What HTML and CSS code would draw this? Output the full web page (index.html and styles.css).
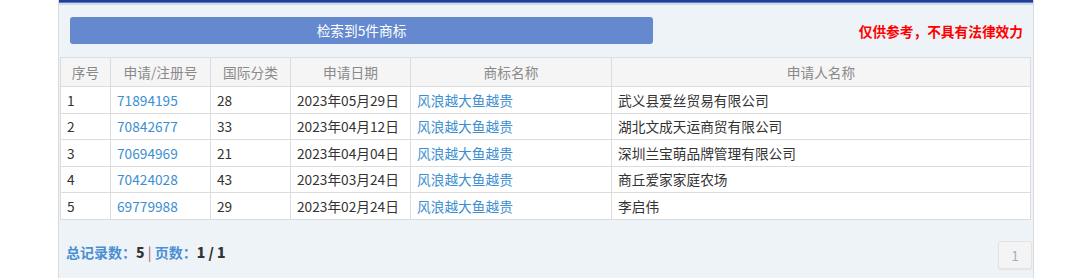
FILE: index.html
```html
<!DOCTYPE html>
<html lang="zh-CN">

<head>
    <meta charset="UTF-8">
    <title>商标检索结果</title>
    <link rel="stylesheet" href="styles.css">
</head>

<body>
    <div class="panel">
        <div class="panel-top"></div>

        <!-- 检索结果标题 -->
        <div class="toolbar">
            <div class="result-btn">检索到5件商标</div>
            <span class="notice">仅供参考，不具有法律效力</span>
        </div>

        <!-- 商标列表 -->
        <table class="tm-table">
            <colgroup>
                <col style="width: 50px">
                <col style="width: 100px">
                <col style="width: 80px">
                <col style="width: 120px">
                <col style="width: 201px">
                <col>
            </colgroup>
            <thead>
                <tr>
                    <th>序号</th>
                    <th>申请/注册号</th>
                    <th>国际分类</th>
                    <th>申请日期</th>
                    <th>商标名称</th>
                    <th>申请人名称</th>
                </tr>
            </thead>
            <tbody>
                <tr>
                    <td>1</td>
                    <td><a href="#">71894195</a></td>
                    <td>28</td>
                    <td>2023年05月29日</td>
                    <td><a href="#">风浪越大鱼越贵</a></td>
                    <td>武义县爱丝贸易有限公司</td>
                </tr>
                <tr>
                    <td>2</td>
                    <td><a href="#">70842677</a></td>
                    <td>33</td>
                    <td>2023年04月12日</td>
                    <td><a href="#">风浪越大鱼越贵</a></td>
                    <td>湖北文成天运商贸有限公司</td>
                </tr>
                <tr>
                    <td>3</td>
                    <td><a href="#">70694969</a></td>
                    <td>21</td>
                    <td>2023年04月04日</td>
                    <td><a href="#">风浪越大鱼越贵</a></td>
                    <td>深圳兰宝萌品牌管理有限公司</td>
                </tr>
                <tr>
                    <td>4</td>
                    <td><a href="#">70424028</a></td>
                    <td>43</td>
                    <td>2023年03月24日</td>
                    <td><a href="#">风浪越大鱼越贵</a></td>
                    <td>商丘爱家家庭农场</td>
                </tr>
                <tr>
                    <td>5</td>
                    <td><a href="#">69779988</a></td>
                    <td>29</td>
                    <td>2023年02月24日</td>
                    <td><a href="#">风浪越大鱼越贵</a></td>
                    <td>李启伟</td>
                </tr>
            </tbody>
        </table>

        <!-- 分页 -->
        <div class="pager">
            <div class="pager-info">
                总记录数：<b>5</b> <span class="sep">|</span> 页数：<b>1 / 1</b>
            </div>
            <a href="#" class="page-num">1</a>
        </div>
    </div>
</body>

</html>
```

FILE: styles.css
```css
* {
    margin: 0;
    padding: 0;
    box-sizing: border-box;
    font-family: 'Noto Sans CJK SC', 'Noto Sans', sans-serif;
}

body {
    background: #fff;
}

.panel {
    width: 976px;
    height: 278px;
    margin-left: 58px;
    background: #eef3f7;
    border-left: 1px solid #d6dbe0;
    border-right: 1px solid #d6dbe0;
}

.panel-top {
    height: 5px;
    background: #1f3f9b;
    border-bottom: 2px solid #d3dae3;
    box-shadow: inset 0 -1px 0 #5b78c2;
}

.toolbar {
    display: flex;
    justify-content: space-between;
    align-items: center;
    padding: 12px 10px 0 11px;
}

.result-btn {
    width: 583px;
    height: 27px;
    line-height: 27px;
    background: #6489cf;
    color: #fff;
    border-radius: 3px;
    text-align: center;
    font-size: 13.7px;
}

.notice {
    color: #f00;
    font-size: 13.7px;
    font-weight: bold;
}

.tm-table {
    width: 971px;
    margin: 13px 0 0 1px;
    border-collapse: collapse;
    table-layout: fixed;
    background: #fff;
    font-size: 13.7px;
}

.tm-table th,
.tm-table td {
    border: 1px solid #dcdcdc;
    padding: 0 6px;
    text-align: left;
    white-space: nowrap;
}

.tm-table th {
    height: 29px;
    background: #f5f5f5;
    color: #8a8a8a;
    font-weight: normal;
    text-align: center;
}

.tm-table td {
    height: 26.5px;
    color: #333;
}

.tm-table a {
    color: #3d8fd1;
    text-decoration: none;
}

.pager {
    display: flex;
    justify-content: space-between;
    align-items: center;
    padding: 21px 1px 0 7px;
}

.pager-info {
    color: #4a8fd4;
    font-size: 14px;
    font-weight: bold;
    margin-bottom: 6px;
}

.pager-info b {
    color: #333;
}

.pager-info .sep {
    color: #a0607e;
    font-weight: normal;
}

.page-num {
    width: 34px;
    height: 28px;
    line-height: 26px;
    text-align: center;
    background: #f4f4f4;
    border: 1px solid #e3e3e3;
    border-radius: 3px;
    box-shadow: 0 1px 2px rgba(0, 0, 0, 0.06);
    color: #9fb1c6;
    font-size: 13.7px;
    text-decoration: none;
}
```
